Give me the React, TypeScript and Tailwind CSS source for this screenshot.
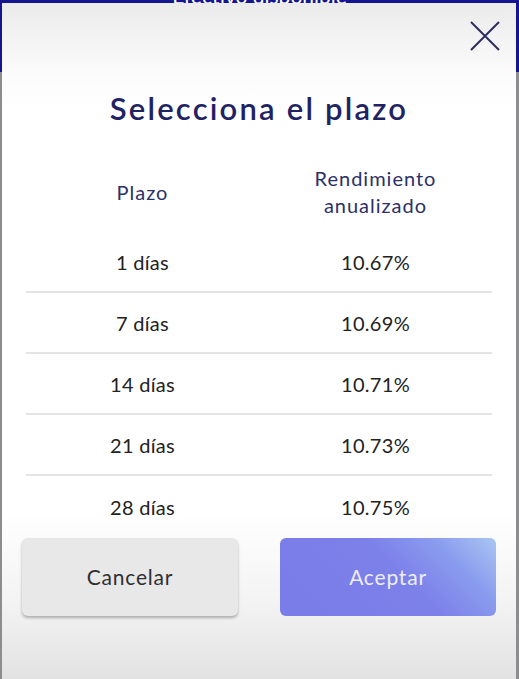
import React from "react";

const rows = [
  { plazo: "1 días", rate: "10.67%" },
  { plazo: "7 días", rate: "10.69%" },
  { plazo: "14 días", rate: "10.71%" },
  { plazo: "21 días", rate: "10.73%" },
  { plazo: "28 días", rate: "10.75%" },
];

const App = () => {
  return (
    <div className="relative w-[519px] h-[679px] overflow-hidden bg-[#8d8d8f] font-['Lato','Liberation_Sans',sans-serif]">
      {/* fondo: cabecera azul de la pantalla */}
      <div className="h-[72px] bg-[#15168f] flex justify-center">
        <span className="mt-[-16px] text-[21px] leading-[24px] text-white">Efectivo disponible</span>
      </div>

      {/* modal */}
      <div className="absolute left-[2px] right-[3px] top-[3px] bottom-0 flex flex-col bg-[linear-gradient(to_bottom,#ebebec_0px,#fbfbfb_70px,#ffffff_110px,#ffffff_510px,#f3f3f3_600px,#e2e2e3_676px)]">
        <div className="flex justify-end pt-[18px] pr-[16px]">
          <svg width="30" height="30" viewBox="0 0 30 30" fill="none" stroke="#2b2e5e" strokeWidth="2">
            <path d="M1 1 L29 29 M29 1 L1 29" />
          </svg>
        </div>

        <h1 className="mt-[38px] text-center text-[31px] leading-[38px] font-semibold tracking-[2.2px] text-[#1f2363]">
          Selecciona el plazo
        </h1>

        <div className="mt-[38px] px-[24px]">
          <div className="grid grid-cols-2 items-center text-[20px] leading-[27px] tracking-[1px] text-[#2d3068]">
            <div className="text-center">Plazo</div>
            <div className="text-center">
              Rendimiento
              <br />
              anualizado
            </div>
          </div>

          <div className="mt-[13px]">
            {rows.map((r, i) => (
              <div
                key={r.plazo}
                className={`grid grid-cols-2 items-center h-[61px] text-[20px] tracking-[0.3px] text-[#222222] ${
                  i < rows.length - 1 ? "border-b-2 border-[#e4e4e4]" : ""
                }`}
              >
                <div className="text-center">{r.plazo}</div>
                <div className="text-center">{r.rate}</div>
              </div>
            ))}
          </div>
        </div>

        <div className="mt-[1px] px-[20px] flex gap-[42px]">
          <button className="w-[216px] h-[78px] rounded-[6px] bg-[#e8e8e9] shadow-[0_2px_3px_rgba(0,0,0,0.28)] text-[21px] tracking-[0.8px] text-[#2f2f33]">
            Cancelar
          </button>
          <button className="w-[216px] h-[78px] rounded-[6px] bg-[linear-gradient(225deg,#a9c6f3_0%,#8a9cee_22%,#7c80e9_45%,#7a7ce8_100%)] text-[21px] tracking-[0.8px] text-[#eceefe]">
            Aceptar
          </button>
        </div>
      </div>
    </div>
  );
};

export default App;
